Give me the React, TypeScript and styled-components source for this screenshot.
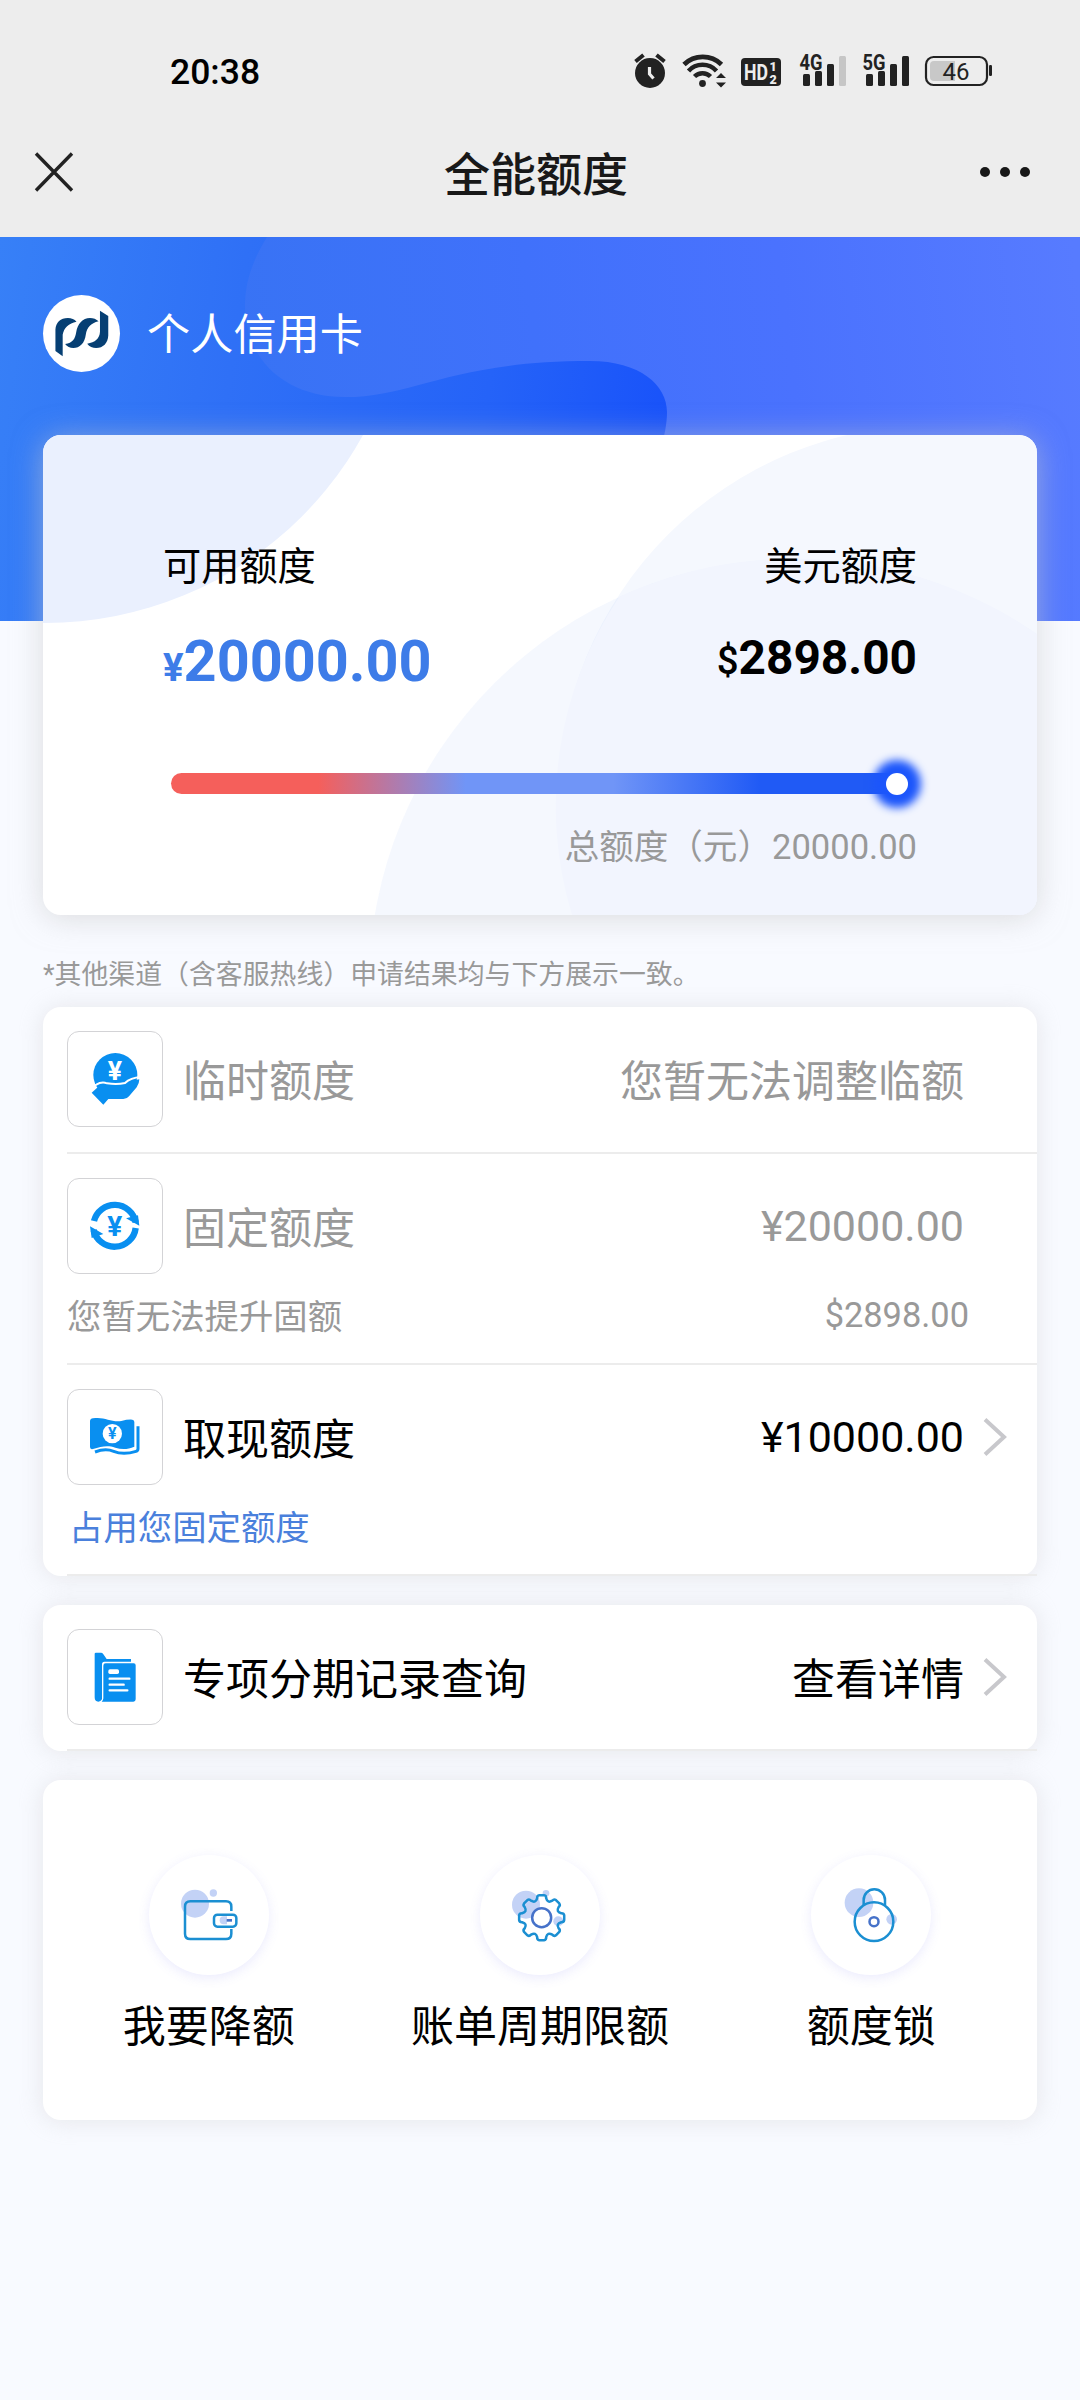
import React from 'react';
import styled, { createGlobalStyle } from 'styled-components';

const GlobalStyle = createGlobalStyle`
  * { box-sizing: border-box; }
  body {
    margin: 0;
    background: #f8faff;
    font-family: Roboto, "Noto Sans CJK SC", sans-serif;
    color: #000;
  }
  svg { display: block; flex: none; }
`;

const Page = styled.div`
  width: 1080px;
  height: 2400px;
  overflow: hidden;
  background: #f8faff;
`;

/* ---------- system bar and title bar ---------- */

const TopBar = styled.header`
  height: 237px;
  background: #ededed;
`;

const StatusBar = styled.div`
  display: flex;
  justify-content: space-between;
  height: 110px;
  padding: 0 80px 0 170px;
`;

const Clock = styled.span`
  font-size: 35.5px;
  font-weight: 500;
  line-height: 145px;
`;

const TitleBar = styled.div`
  display: flex;
  align-items: center;
  justify-content: space-between;
  height: 127px;
  padding: 0 49px 3px 33px;
`;

const Title = styled.h1`
  margin: 0;
  padding-top: 6px;
  font-size: 46px;
  font-weight: 500;
  line-height: 60px;
  color: #181818;
`;

const TitleSide = styled.div<{ $end?: boolean }>`
  display: flex;
  justify-content: ${(p) => (p.$end ? 'flex-end' : 'flex-start')};
  width: ${(p) => (p.$end ? 60 : 68)}px;
`;

/* ---------- hero ---------- */

const Hero = styled.section`
  position: relative;
  height: 384px;
  padding: 58px 43px 0;
  background: linear-gradient(98deg, #3780f7 0%, #2f70f6 22%, #2563f8 45%, #1750fa 64%);
`;

const HeroWave = styled.svg`
  position: absolute;
  inset: 0;
`;

const Account = styled.div`
  position: relative;
  display: flex;
  align-items: center;
  gap: 27px;
  height: 77px;
`;

const AccountName = styled.span`
  padding-top: 3px;
  font-size: 43.2px;
  line-height: 77px;
  color: #fff;
`;

const Logo = styled.span`
  width: 77px;
  height: 77px;
  border-radius: 50%;
  background: #fff;
`;

/* ---------- balance card ---------- */

const Balance = styled.section`
  position: relative;
  height: 480px;
  margin: -186px 43px 0;
  border-radius: 18px;
  background: #fff;
  box-shadow: 0 3px 30px rgba(200, 200, 200, 0.6);
`;

const BalanceArt = styled.svg`
  position: absolute;
  inset: 0;
  border-radius: 18px;
`;

const BalanceBody = styled.div`
  position: relative;
  padding: 102px 120px 0;
`;

const Split = styled.div<{ $h: number }>`
  display: flex;
  justify-content: space-between;
  align-items: baseline;
  height: ${(p) => p.$h}px;
`;

const Caption = styled.span`
  font-size: 38.2px;
  line-height: 60px;
`;

const Amount = styled.span<{ $size: number; $color: string; $lift?: number }>`
  font-size: ${(p) => p.$size}px;
  font-weight: 700;
  line-height: 70px;
  color: ${(p) => p.$color};
  transform: translateY(${(p) => -(p.$lift ?? 0)}px);
`;

const Currency = styled.small<{ $weight: number }>`
  font-size: 38.4px;
  font-weight: ${(p) => p.$weight};
`;

const Track = styled.div`
  display: flex;
  justify-content: flex-end;
  align-items: center;
  height: 21px;
  margin: 0 9px 0 8px;
  border-radius: 11px;
  background: linear-gradient(90deg, #f55f5b 20%, #7095f7 40%, #7095f7 60%, #205af5 80%);
`;

const Thumb = styled.span`
  width: 22px;
  height: 22px;
  border-radius: 50%;
  background: #fff;
  box-shadow: 0 0 9px 13px #1c56fb;
`;

const Total = styled.div`
  padding-top: 23px;
  font-size: 34.56px;
  line-height: 60px;
  text-align: right;
  color: #999;
`;

const Note = styled.p`
  margin: 38px 43px 0;
  height: 54px;
  font-size: 26.88px;
  line-height: 44px;
  color: #999;
`;

/* ---------- white cards ---------- */

const Card = styled.section<{ $mt?: number }>`
  margin: ${(p) => p.$mt ?? 0}px 43px 0;
  padding-left: 24px;
  border-radius: 18px;
  background: #fff;
  box-shadow: 0 1px 24px rgba(204, 204, 204, 0.42);
`;

const Row = styled.div`
  padding-top: 24px;
  border-bottom: 2px solid #ececec;
`;

const RowMain = styled.div<{ $muted?: boolean; $gap?: number }>`
  display: flex;
  align-items: center;
  height: 96px;
  margin-bottom: ${(p) => p.$gap ?? 0}px;
  color: ${(p) => (p.$muted ? '#999' : '#000')};
  font-size: 43px;
  line-height: 96px;
`;

const IconBox = styled.span`
  width: 96px;
  height: 96px;
  border: 1px solid #d3d3d6;
  border-radius: 12px;
`;

const RowTitle = styled.span`
  flex: 1;
  padding: 5px 0 0 20px;
`;

const RowValue = styled.span<{ $latin?: boolean }>`
  padding-top: ${(p) => (p.$latin ? 0 : 5)}px;
`;

const ArrowSlot = styled.span`
  display: flex;
  align-items: center;
  width: 73px;
  padding-left: 19px;
`;

const RowSub = styled.div<{ $blue?: boolean }>`
  display: flex;
  justify-content: space-between;
  height: 89px;
  padding: 0 68px 0 ${(p) => (p.$blue ? 2 : 0)}px;
  font-size: 34.4px;
  line-height: 86px;
  color: ${(p) => (p.$blue ? '#4a80dc' : '#999')};
`;

const SubValue = styled.span`
  line-height: 82px;
`;

const Actions = styled(Card)`
  display: grid;
  grid-template-columns: repeat(3, 1fr);
  height: 340px;
  padding: 75px 0 0;
`;

const Action = styled.div`
  display: flex;
  flex-direction: column;
  align-items: center;
  font-size: 43px;
  line-height: 60px;
`;

const Bubble = styled.span`
  width: 120px;
  height: 120px;
  margin-bottom: 22px;
  border-radius: 50%;
  background: #fff;
  box-shadow: 0 3px 12px rgba(110, 110, 240, 0.14);
`;

/* ---------- drawings ---------- */

const INK = '#222';

const SignalBars = ({ x, dim }: { x: number; dim?: boolean }) => (
  <g fill={INK}>
    <rect x={x} y="74" width="7" height="12" rx="1.5" />
    <rect x={x + 12} y="71" width="7" height="15" rx="1.5" />
    <rect x={x + 24} y="64" width="7" height="22" rx="1.5" />
    <rect x={x + 36} y="56" width="7" height="30" rx="1.5" fill={dim ? '#c6c6c6' : INK} />
  </g>
);

const StatusIcons = () => (
  <svg width="370" height="110" viewBox="630 0 370 110" fontFamily="Roboto, sans-serif">
    <circle cx="650" cy="73" r="15" fill={INK} />
    <path d="M635.5 61.5l8-6.5M664.5 61.5l-8-6.5" stroke={INK} strokeWidth="4" />
    <path d="M649.5 67v7l4 4.5" stroke="#ededed" strokeWidth="3.2" fill="none" />
    <g fill="none" stroke={INK} strokeWidth="4.8">
      <path d="M684 64.5a27 27 0 0 1 37.5 0" />
      <path d="M688.5 71a19 19 0 0 1 28 0" strokeWidth="4.5" />
      <path d="M694.5 76.5a11.5 11.5 0 0 1 16 0" strokeWidth="4.5" />
    </g>
    <circle cx="702.5" cy="83.5" r="3.4" fill={INK} />
    <path d="M721 73l5 5h-10zM721 87.5l5-5h-10z" fill={INK} />
    <rect x="741" y="58" width="40" height="28" rx="4" fill={INK} />
    <text x="744" y="80" fontSize="22" fontWeight="700" fill="#ededed" textLength="24" lengthAdjust="spacingAndGlyphs">HD</text>
    <text x="769.5" y="70.5" fontSize="12.5" fontWeight="900" fill="#ededed">1</text>
    <text x="769.5" y="83.5" fontSize="12.5" fontWeight="900" fill="#ededed">2</text>
    <text x="799.5" y="69.5" fontSize="21.5" fontWeight="700" fill={INK} textLength="23" lengthAdjust="spacingAndGlyphs">4G</text>
    <SignalBars x={803} dim />
    <text x="862.5" y="69.5" fontSize="21.5" fontWeight="700" fill={INK} textLength="23" lengthAdjust="spacingAndGlyphs">5G</text>
    <SignalBars x={866} />
    <rect x="926" y="57" width="61" height="28" rx="7.5" fill="none" stroke={INK} strokeWidth="2.2" />
    <path d="M955 61h-21q-4 0-4 4v12q0 4 4 4h21z" fill="#c8c8c8" />
    <rect x="989" y="65" width="3" height="11" rx="1.2" fill={INK} />
    <text x="956" y="80" fontSize="24" fontWeight="400" textAnchor="middle" fill={INK}>46</text>
  </svg>
);

const CloseIcon = () => (
  <svg width="42" height="42" viewBox="0 0 42 42">
    <path d="M3 2.5l36 37M39 2.5l-36 37" stroke="#222" strokeWidth="3.4" />
  </svg>
);

const MoreIcon = () => (
  <svg width="52" height="12" viewBox="0 0 52 12" fill="#181818">
    <circle cx="6" cy="6" r="5" />
    <circle cx="26" cy="6" r="5" />
    <circle cx="46" cy="6" r="5" />
  </svg>
);

const BankMark = () => (
  <svg width="77" height="77" viewBox="0 0 223 228" preserveAspectRatio="none" fill="#063f73">
    <path d="M57 181L36 166V102C37 81 51 68 72 68Q88 68 97 79C75 84 60 97 57 118Z" />
    <path d="M64 145C86 142 93 130 96 111C100 85 115 68 136 68Q151 68 161 78C138 84 127 97 124 117C121 143 106 157 88 157Q73 157 64 145Z" />
    <path d="M165 47L189 62V120C188 143 174 157 154 157Q138 157 128 144C151 141 164 129 165 109Z" />
  </svg>
);

const YenMark = ({ x, y, size, fill }: { x: number; y: number; size: number; fill: string }) => (
  <text x={x} y={y} fontSize={size} fontWeight="700" fill={fill} textAnchor="middle" fontFamily="Roboto, sans-serif">¥</text>
);

const BLUE = '#098ff0';

const Glyph = ({ children }: { children: React.ReactNode }) => (
  <svg width="94" height="94" viewBox="3 3 282 282">{children}</svg>
);

const HandCoin = () => (
  <Glyph>
    <circle cx="145" cy="132" r="66" fill={BLUE} />
    <YenMark x={144} y={147} size={80} fill="#fff" />
    <path
      d="M74 185L93 168Q104 159 119 164Q150 169 177 163Q192 147 217 145Q217 157 209 169L186 196Q180 204 169 204H124L109 221Z"
      fill={BLUE}
    />
    <path d="M62 176L88 161Q104 151 120 157Q150 162 174 156Q190 140 222 138" fill="none" stroke="#fff" strokeWidth="6" />
    <path d="M60 150L80 166L64 182ZM214 144L225 130L228 140Z" fill="#fff" />
  </Glyph>
);

const CycleCoin = () => (
  <Glyph>
    <g fill="none" stroke={BLUE} strokeWidth="19">
      <path d="M81 129A64 64 0 0 1 206 133" />
      <path d="M206 150A64 64 0 0 1 80 156" />
    </g>
    <path d="M177 121L217 143L213 112ZM69 145L109 168L74 180Z" fill={BLUE} />
    <YenMark x={143} y={174} size={84} fill={BLUE} />
  </Glyph>
);

const Banknote = () => (
  <Glyph>
    <path
      d="M69 97Q69 89 78 88C112 82 130 100 163 96Q182 91 196 92Q202 93 202 99V173C182 182 163 182 145 176C122 168 104 172 78 180Q69 182 69 174Z"
      fill={BLUE}
    />
    <circle cx="136" cy="134" r="29" fill="#fff" />
    <YenMark x={136} y={151} size={48} fill={BLUE} />
    <path d="M84 189C108 180 122 180 140 187C164 197 188 193 207 187Q213 185 213 179V112" fill="none" stroke={BLUE} strokeWidth="9" />
  </Glyph>
);

const Records = () => (
  <Glyph>
    <path d="M83 74Q83 71 87 71H102Q106 71 108 74L119 90H192V98H112Q105 98 105 106V211Q101 218 94 218Q83 218 83 205Z" fill={BLUE} />
    <path d="M116 103H200Q206 103 206 109V211Q206 218 199 218H104Q109 214 109 208V110Q109 103 116 103Z" fill={BLUE} />
    <rect x="124" y="121" width="32" height="14" rx="5" fill="#fff" />
    <path d="M128 149H187M128 167H170M128 184H181" stroke="#fff" strokeWidth="7" strokeLinecap="round" />
  </Glyph>
);

const LINE = '#1b8fd2';
const ACCENT = '#4672c9';
const PALE = '#c3d2f6';

const Wallet = () => (
  <svg width="120" height="120" viewBox="0 0 360 360" fill="none" stroke={LINE} strokeWidth="7.5">
    <g fill={PALE} stroke="none">
      <circle cx="138" cy="146" r="42" />
      <circle cx="193" cy="114" r="11" />
      <path d="M224 184h10v24h-10a12 12 0 0 1 0-24z" />
    </g>
    <path d="M247 168V155Q247 139 231 139H124Q108 139 108 155V236Q108 252 124 252H231Q247 252 247 236V222" />
    <rect x="195" y="179" width="67" height="36" rx="10" />
    <path d="M233 196h16" stroke={ACCENT} strokeWidth="8" />
  </svg>
);

const gearPath = (() => {
  const pt = (deg: number, r: number) => {
    const a = ((deg - 90) * Math.PI) / 180;
    return `${(185 + r * Math.cos(a)).toFixed(1)} ${(188 + r * Math.sin(a)).toFixed(1)}`;
  };
  let d = `M${pt(-13, 60)}`;
  for (let a = 0; a < 360; a += 45) {
    d += `Q${pt(a - 12, 68)} ${pt(a - 6, 68)}L${pt(a + 6, 68)}Q${pt(a + 12, 68)} ${pt(a + 13, 60)}Q${pt(a + 22.5, 46)} ${pt(a + 32, 60)}`;
  }
  return d + 'Z';
})();

const Gear = () => (
  <svg width="120" height="120" viewBox="0 0 360 360" fill="none" stroke={LINE} strokeWidth="7.5">
    <g fill={PALE} stroke="none">
      <circle cx="138" cy="149" r="42" />
      <circle cx="198" cy="115" r="10" />
      <circle cx="235" cy="199" r="15" />
    </g>
    <path d={gearPath} strokeLinejoin="round" />
    <circle cx="185" cy="188" r="28.5" fill="#fff" stroke={ACCENT} />
  </svg>
);

const Lock = () => (
  <svg width="120" height="120" viewBox="0 0 360 360" fill="none" stroke={LINE} strokeWidth="7.5">
    <g fill={PALE} stroke="none">
      <circle cx="144" cy="143" r="43" />
      <circle cx="242" cy="193" r="16" />
    </g>
    <path d="M158 150V135A32 32 0 0 1 222 135V150" />
    <circle cx="189" cy="200" r="58" />
    <circle cx="189" cy="200" r="13.5" stroke={ACCENT} />
  </svg>
);

const Chevron = () => (
  <svg width="24" height="40" viewBox="0 0 24 40">
    <path d="M2 2.5L21 20L2 37.5" fill="none" stroke="#c8c8cc" strokeWidth="4" />
  </svg>
);

/* ---------- page ---------- */

type RowProps = {
  icon: React.ReactNode;
  title: string;
  value: string;
  latin?: boolean;
  muted?: boolean;
  arrow?: boolean;
  gap?: number;
  children?: React.ReactNode;
};

const LimitRow = ({ icon, title, value, latin, muted, arrow, gap, children }: RowProps) => (
  <Row>
    <RowMain $muted={muted} $gap={gap}>
      <IconBox>{icon}</IconBox>
      <RowTitle>{title}</RowTitle>
      <RowValue $latin={latin}>{value}</RowValue>
      <ArrowSlot>{arrow && <Chevron />}</ArrowSlot>
    </RowMain>
    {children}
  </Row>
);

export default function App() {
  return (
    <Page>
      <GlobalStyle />
      <TopBar>
        <StatusBar>
          <Clock>20:38</Clock>
          <StatusIcons />
        </StatusBar>
        <TitleBar>
          <TitleSide><CloseIcon /></TitleSide>
          <Title>全能额度</Title>
          <TitleSide $end><MoreIcon /></TitleSide>
        </TitleBar>
      </TopBar>

      <Hero>
        <HeroWave width="1080" height="384" viewBox="0 237 1080 384">
          <defs>
            <linearGradient id="wave" gradientUnits="userSpaceOnUse" x1="245" y1="400" x2="1080" y2="300">
              <stop offset="0" stopColor="#3873f4" />
              <stop offset="0.35" stopColor="#4071fb" />
              <stop offset="0.65" stopColor="#4a72fe" />
              <stop offset="1" stopColor="#577bff" />
            </linearGradient>
          </defs>
          <path
            d="M267 237C250 265 245 285 245 308C247 365 290 397 345 397C415 397 450 361 590 361C640 361 667 385 667 412C667 450 640 500 600 621H1080V237Z"
            fill="url(#wave)"
          />
        </HeroWave>
        <Account>
          <Logo><BankMark /></Logo>
          <AccountName>个人信用卡</AccountName>
        </Account>
      </Hero>

      <Balance>
        <BalanceArt width="994" height="480" viewBox="43 435 994 480">
          <circle cx="45" cy="260" r="363" fill="#eaf0fe" />
          <circle cx="933" cy="800" r="375" fill="#f5f8fe" />
          <circle cx="795" cy="985" r="426" fill="#4070f0" fillOpacity="0.05" />
          <path d="M572 915A375 375 0 0 1 619.5 596.5A426 426 0 0 1 1037 634V915Z" fill="#f2f5fe" />
        </BalanceArt>
        <BalanceBody>
          <Split $h={90}>
            <Caption>可用额度</Caption>
            <Caption>美元额度</Caption>
          </Split>
          <Split $h={146}>
            <Amount $size={57.6} $color="#3d7ce8"><Currency $weight={700}>¥</Currency>20000.00</Amount>
            <Amount $size={47.8} $color="#000" $lift={7}><Currency $weight={500}>$</Currency>2898.00</Amount>
          </Split>
          <Track><Thumb /></Track>
          <Total>总额度（元）20000.00</Total>
        </BalanceBody>
      </Balance>

      <Note>*其他渠道（含客服热线）申请结果均与下方展示一致。</Note>

      <Card>
        <LimitRow icon={<HandCoin />} title="临时额度" value="您暂无法调整临额" muted gap={25} />
        <LimitRow icon={<CycleCoin />} title="固定额度" value="¥20000.00" latin muted>
          <RowSub>
            <span>您暂无法提升固额</span>
            <SubValue>$2898.00</SubValue>
          </RowSub>
        </LimitRow>
        <LimitRow icon={<Banknote />} title="取现额度" value="¥10000.00" latin arrow>
          <RowSub $blue>占用您固定额度</RowSub>
        </LimitRow>
      </Card>

      <Card $mt={29}>
        <LimitRow icon={<Records />} title="专项分期记录查询" value="查看详情" arrow gap={24} />
      </Card>

      <Actions $mt={29}>
        <Action><Bubble><Wallet /></Bubble>我要降额</Action>
        <Action><Bubble><Gear /></Bubble>账单周期限额</Action>
        <Action><Bubble><Lock /></Bubble>额度锁</Action>
      </Actions>
    </Page>
  );
}
